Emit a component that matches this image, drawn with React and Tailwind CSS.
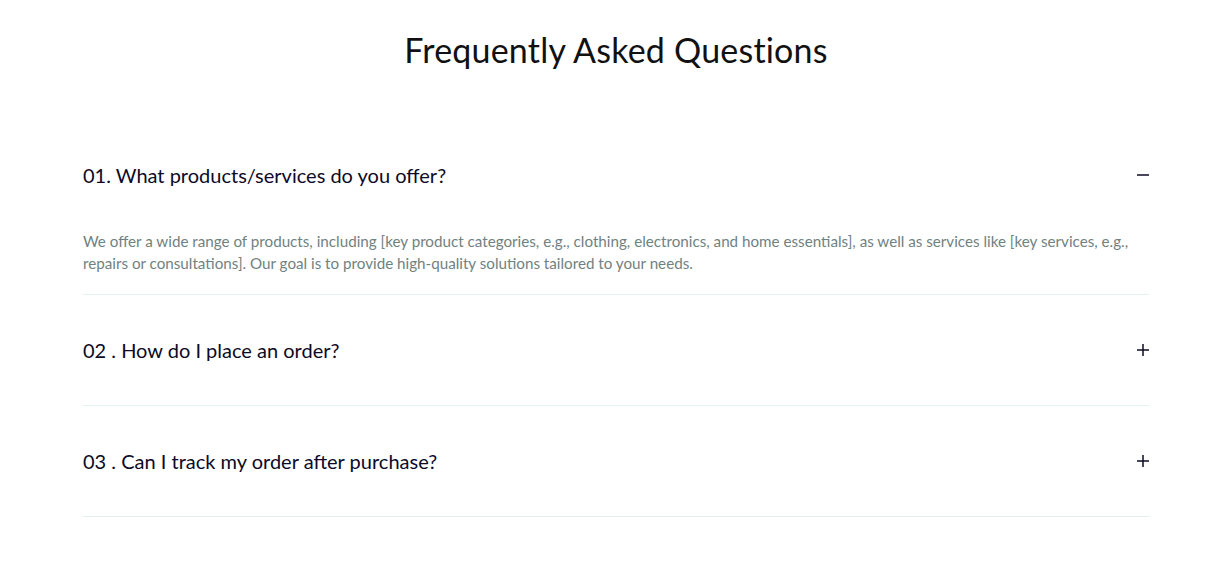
import { useState } from 'react'

const faqs = [
  {
    q: '01. What products/services do you offer?',
    a: 'We offer a wide range of products, including [key product categories, e.g., clothing, electronics, and home essentials], as well as services like [key services, e.g., repairs or consultations]. Our goal is to provide high-quality solutions tailored to your needs.',
  },
  {
    q: '02 . How do I place an order?',
    a: 'Simply browse our catalog, add the items you like to your cart and proceed to checkout. Follow the steps to enter your shipping details and payment information.',
  },
  {
    q: '03 . Can I track my order after purchase?',
    a: 'Yes. Once your order ships, you will receive an email with a tracking number and a link to follow your package.',
  },
]

function Icon({ open }) {
  return (
    <svg width="12" height="12" viewBox="0 0 12 12" className="shrink-0 text-[#0c0a26]">
      <path d="M0 6h12" stroke="currentColor" strokeWidth="1.5" />
      {!open && <path d="M6 0v12" stroke="currentColor" strokeWidth="1.5" />}
    </svg>
  )
}

export default function App() {
  const [open, setOpen] = useState(0)

  return (
    <div className="min-h-screen bg-white font-['Lato',sans-serif]">
      <section className="w-[1066px] ml-[83px] pt-[30px]">
        <h2 className="text-center text-[34px] leading-[40px] text-[#111111] tracking-[0.2px]">
          Frequently Asked Questions
        </h2>

        <div className="mt-[50px]">
          {faqs.map((f, i) => (
            <div key={i} className="border-b border-[#e3f2f1]">
              <button
                onClick={() => setOpen(open === i ? -1 : i)}
                className="w-full flex items-center justify-between py-[40px] text-left"
              >
                <span className="text-[20px] leading-[30px] text-[#0c0a26]">{f.q}</span>
                <Icon open={open === i} />
              </button>
              {open === i && (
                <p className="pb-[20px] text-[15.2px] leading-[22px] text-[#6f8282] pr-2">{f.a}</p>
              )}
            </div>
          ))}
        </div>
      </section>
    </div>
  )
}
